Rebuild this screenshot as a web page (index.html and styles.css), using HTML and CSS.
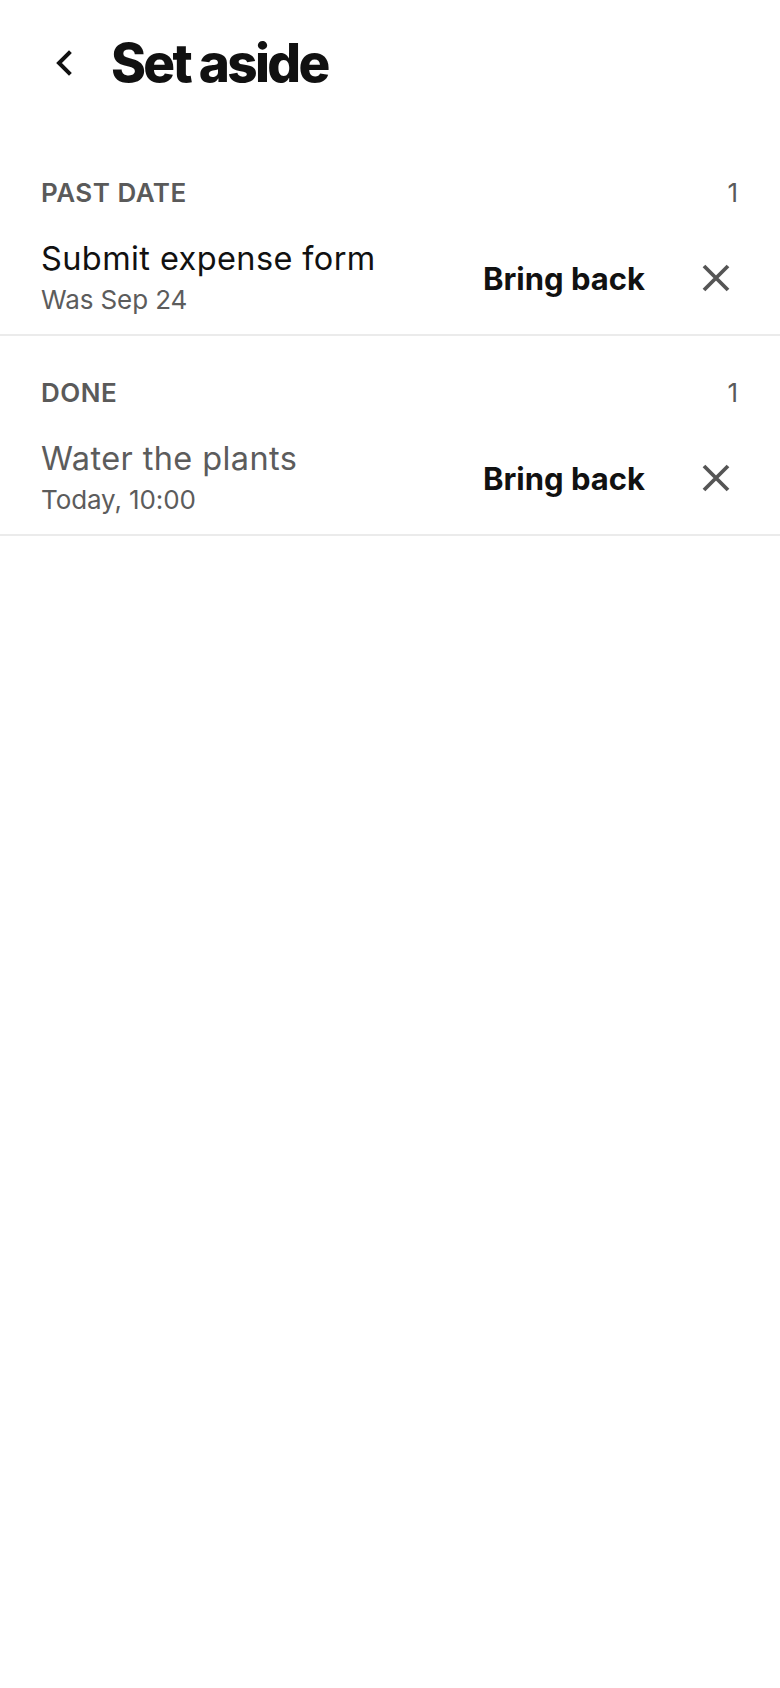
FILE: index.html
```html
<!DOCTYPE html>
<html lang="en">

<head>
    <meta charset="UTF-8">
    <meta name="viewport" content="width=device-width, initial-scale=1.0">
    <title>Set aside</title>
    <link rel="stylesheet" href="styles.css">
</head>

<body>
    <header class="topbar">
        <button class="back" aria-label="Back">
            <svg width="20" height="26" viewBox="0 0 20 26">
                <path d="M15 3 L5 13 L15 23" fill="none" stroke="#111" stroke-width="4" stroke-linecap="square" stroke-linejoin="miter" />
            </svg>
        </button>
        <h1 class="title">Set aside</h1>
    </header>

    <section class="group">
        <div class="group-head">
            <span class="group-label">PAST DATE</span>
            <span class="group-count">1</span>
        </div>
        <div class="item">
            <div class="item-text">
                <div class="item-title">Submit expense form</div>
                <div class="item-meta">Was Sep 24</div>
            </div>
            <button class="bring-back">Bring back</button>
            <button class="dismiss" aria-label="Remove">
                <svg width="28" height="28" viewBox="0 0 28 28">
                    <path d="M2 2 L26 26 M26 2 L2 26" stroke="#555" stroke-width="3.8" />
                </svg>
            </button>
        </div>
    </section>

    <section class="group">
        <div class="group-head">
            <span class="group-label">DONE</span>
            <span class="group-count">1</span>
        </div>
        <div class="item done">
            <div class="item-text">
                <div class="item-title">Water the plants</div>
                <div class="item-meta">Today, 10:00</div>
            </div>
            <button class="bring-back">Bring back</button>
            <button class="dismiss" aria-label="Remove">
                <svg width="28" height="28" viewBox="0 0 28 28">
                    <path d="M2 2 L26 26 M26 2 L2 26" stroke="#555" stroke-width="3.8" />
                </svg>
            </button>
        </div>
    </section>
</body>

</html>
```

FILE: styles.css
```css
body {
    margin: 0;
    background: #fff;
    font-family: Inter, "Noto Sans", sans-serif;
    color: #111;
}

button {
    font-family: inherit;
    background: none;
    border: 0;
    padding: 0;
    cursor: pointer;
}

.topbar {
    display: flex;
    align-items: center;
    height: 64px;
    padding: 31px 0 41px 54px;
}

.back {
    display: flex;
    width: 20px;
    height: 26px;
}

.title {
    margin: 0 0 0 37px;
    font-size: 53px;
    line-height: 64px;
    font-weight: 800;
    letter-spacing: -2.7px;
}

.group {
    padding: 41px 42px 17px 41px;
    border-bottom: 2px solid #ebebeb;
}

.group-head {
    display: flex;
    justify-content: space-between;
    font-size: 26px;
    line-height: 32px;
    color: #5a5a5a;
}

.group-label {
    font-weight: 600;
    letter-spacing: 0.5px;
}

.group-count {
    font-weight: 400;
}

.item {
    display: flex;
    align-items: center;
    margin-top: 30px;
    padding-right: 8px;
}

.item-text {
    flex: 1;
}

.item-title {
    font-size: 32.5px;
    line-height: 40px;
    letter-spacing: 0.4px;
    color: #111;
}

.item-meta {
    margin-top: 4px;
    font-size: 26px;
    line-height: 34px;
    letter-spacing: -0.1px;
    color: #5c5c5c;
}

.done .item-title {
    color: #5c5c5c;
}

.bring-back {
    font-size: 31px;
    font-weight: 700;
    letter-spacing: 0;
    color: #111;
}

.dismiss {
    display: flex;
    margin-left: 57px;
}
```
